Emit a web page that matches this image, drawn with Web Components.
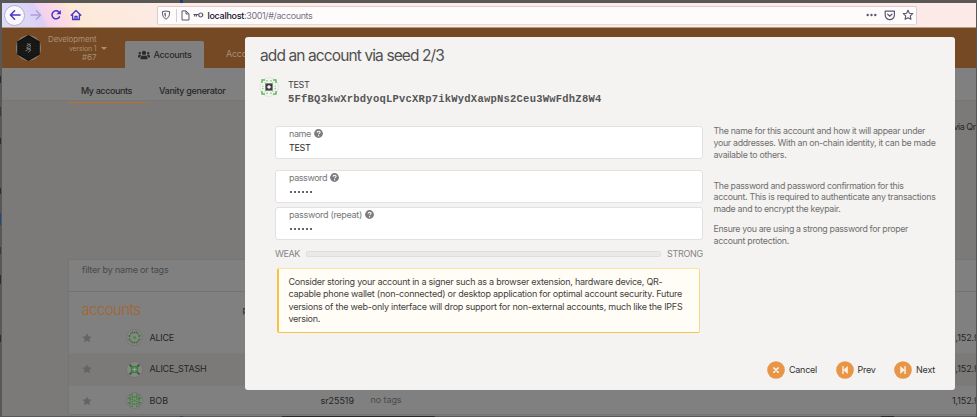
<!DOCTYPE html>
<html lang="en">
<head>
<meta charset="utf-8">
<title>Accounts</title>
<style>
html,body{margin:0;width:977px;height:417px;overflow:hidden;background:#595855}
body{font-family:Inter,"Liberation Sans",sans-serif}
</style>
</head>
<body>
<app-window></app-window>
<script>
const define=(name,html,setup)=>customElements.define(name,class extends HTMLElement{
  connectedCallback(){
    if(this.shadowRoot)return;
    const root=this.attachShadow({mode:'open'});
    root.innerHTML=typeof html==='function'?html(this):html;
    if(setup)setup(this,root);
  }
});

/* One line of text; attribute w gives its width, reached with letter spacing. */
define('text-line','<style>:host{display:block;white-space:nowrap;line-height:12px;font-size:9px;flex:none}span{display:inline-block}</style><span><slot></slot></span>',(el,root)=>{
  const w=parseFloat(el.getAttribute('w'));
  if(!w)return;
  queueMicrotask(()=>{
    const n=[...el.textContent].length;
    const now=root.querySelector('span').getBoundingClientRect().width;
    if(n&&now)el.style.letterSpacing=((w-now)/n).toFixed(4)+'px';
  });
});

/* Icons */
const ICONS={
 back:'<svg width="12" height="12" viewBox="0 0 12 12"><path d="M11 6H1.6M5.6 1.8L1.4 6l4.2 4.2" fill="none" stroke="currentColor" stroke-width="1.5" stroke-linecap="round" stroke-linejoin="round"/></svg>',
 forward:'<svg width="12" height="12" viewBox="0 0 12 12"><path d="M1 6h9.4M6.4 1.8L10.6 6l-4.2 4.2" fill="none" stroke="currentColor" stroke-width="1.4" stroke-linecap="round" stroke-linejoin="round"/></svg>',
 reload:'<svg width="12" height="12" viewBox="0 0 12 12"><path d="M9.5 7.8A4 4 0 1 1 8.9 3.1L10 4.2" fill="none" stroke="currentColor" stroke-width="1.5" stroke-linecap="round"/><path d="M10.8 1v4.3H6.5z" fill="currentColor"/></svg>',
 home:'<svg width="12" height="12" viewBox="0 0 12 12"><path d="M1.2 6.2L6 1.4l4.8 4.8M2.6 5.5v5h6.8v-5M5 10.4V7.3h2v3.1" fill="none" stroke="currentColor" stroke-width="1.35" stroke-linecap="round" stroke-linejoin="round"/></svg>',
 shield:'<svg width="10" height="10" viewBox="0 0 10 10"><path d="M1.4 1.6Q5 .5 8.6 1.6C8.7 5.4 7.800 7.700 5 9.200 2.200 7.700 1.300 5.400 1.400 1.600z" fill="none" stroke="currentColor" stroke-width="1"/><path d="M5 2.700V7.300C3.500 6.300 3.100 5 3.100 3z" fill="currentColor" opacity=".75"/></svg>',
 page:'<svg width="9" height="11" viewBox="0 0 9 11"><path d="M1 .9h4L8 3.900V10H1zM5 .9v3h3" fill="none" stroke="currentColor" stroke-width="1" stroke-linejoin="round"/></svg>',
 key:'<svg width="11" height="6" viewBox="0 0 11 6"><path d="M.4 2.500h5.200M1.700 2.500v2M3.500 2.500v2" fill="none" stroke="currentColor" stroke-width="1.200"/><circle cx="7.700" cy="3" r="2" fill="none" stroke="currentColor" stroke-width="1.200"/></svg>',
 dots:'<svg width="11" height="4" viewBox="0 0 11 4"><g fill="currentColor"><circle cx="1.700" cy="2" r="1.200"/><circle cx="5.500" cy="2" r="1.200"/><circle cx="9.300" cy="2" r="1.200"/></g></svg>',
 pocket:'<svg width="12" height="11" viewBox="0 0 12 11"><path d="M1.200 1.200h9.200V5a4.600 4.600 0 0 1-9.200 0zM3.700 4.200l2.100 2 2.100-2" fill="none" stroke="currentColor" stroke-width="1.200" stroke-linejoin="round" stroke-linecap="round"/></svg>',
 staro:'<svg width="12" height="12" viewBox="0 0 12 12"><path d="M6 1.200l1.400 3 3.300.4-2.400 2.300.6 3.400L6 8.700l-2.900 1.600.6-3.400L1.300 4.600l3.300-.4z" fill="none" stroke="currentColor" stroke-width="1.150" stroke-linejoin="round"/></svg>',
 star:'<svg width="10" height="10" viewBox="0 0 10 10"><path d="M5 .4l1.400 2.900 3.200.5-2.300 2.200.6 3.200L5 7.700 2.100 9.200l.6-3.200L.4 3.800l3.200-.5z" fill="currentColor"/></svg>',
 users:'<svg width="12" height="10" viewBox="0 0 640 512"><path fill="currentColor" d="M96 224a64 64 0 1 0 0-128 64 64 0 0 0 0 128zm448 0a64 64 0 1 0 0-128 64 64 0 0 0 0 128zm32 32h-64c-18 0-34 7-45 19 40 22 69 62 75 109h66c18 0 32-14 32-32v-32c0-35-29-64-64-64zm-256 0a112 112 0 1 0 0-224 112 112 0 0 0 0 224zm77 32h-8a155 155 0 0 1-138 0h-8c-64 0-115 52-115 115v29c0 27 21 48 48 48h288c27 0 48-21 48-48v-29c0-63-51-115-115-115zM173 275c-11-12-27-19-45-19H64c-35 0-64 29-64 64v32c0 18 14 32 32 32h66c6-47 35-87 75-109z"/></svg>',
 help:'<svg width="9" height="9" viewBox="0 0 9 9"><circle cx="4.500" cy="4.500" r="4.400" fill="#7b7b7b"/><path d="M3.050 3.600C3.150 2.500 4 2.150 4.700 2.200c.9.050 1.400.6 1.350 1.300C6 4.400 4.650 4.400 4.600 5.300" fill="none" stroke="#fff" stroke-width="1.050"/><circle cx="4.600" cy="6.700" r=".68" fill="#fff"/></svg>',
 cancel:'<svg width="18" height="18" viewBox="0 0 18 18"><circle cx="9" cy="9" r="8.800" fill="#e89547"/><path d="M6.900 7l4.200 4.200M11.100 7l-4.200 4.200" stroke="#fdf3e6" stroke-width="1.700" stroke-linecap="round"/></svg>',
 prev:'<svg width="18" height="18" viewBox="0 0 18 18"><circle cx="9" cy="9" r="8.800" fill="#e89547"/><path d="M6.200 5.200h1.500v3.300L11.800 5v8L7.700 9.500v3.400H6.200z" fill="#fdeedd"/></svg>',
 next:'<svg width="18" height="18" viewBox="0 0 18 18"><circle cx="9" cy="9" r="8.800" fill="#e89547"/><path d="M11.800 5.200h-1.500v3.300L6.200 5v8l4.100-3.500v3.400h1.500z" fill="#fdeedd"/></svg>',
 logo:'<svg width="27" height="28" viewBox="0 0 27 28"><defs><pattern id="m" width="2.400" height="2.400" patternUnits="userSpaceOnUse"><path d="M0 1.200L1.200 0l1.200 1.200-1.200 1.200z" fill="none" stroke="#3d3b39" stroke-width=".45"/></pattern></defs><circle cx="13.500" cy="14" r="12.700" fill="#85776c"/><path d="M13.500 1L24.700 7.400v13.200L13.500 27 2.300 20.600V7.400z" fill="#080808"/><path d="M13.500 2L23.900 8v12L13.500 26 3.100 20V8z" fill="url(#m)"/><path d="M12 9.500l4 2-4.500 2.500 4.500 2-3 2.500M15.500 9.500l-4 2.500M16 13.500l-5.500 3.500" fill="none" stroke="#8e8d8b" stroke-width=".8"/></svg>',
 idTest:'<svg width="20" height="20" viewBox="0 0 20 20"><circle cx="10" cy="10" r="9.500" fill="#f2f4ef" stroke="#dfe0dc" stroke-width=".8"/><path d="M3 6V3h3M14 3h3v3M17 14v3h-3M6 17H3v-3" fill="none" stroke="#62b862" stroke-width="1.500"/><path d="M7.200 3.700h1.500M11.300 3.700h1.500M7.200 16.300h1.500M11.300 16.300h1.500M3.700 8.700v1M3.700 11v1.300M16.300 8.700v1M16.300 11v1.300M5.600 5.600h1M13.400 5.600h1M5.600 14.400h1M13.400 14.400h1" stroke="#8fd08c" stroke-width="1.400"/><rect x="6.400" y="6.400" width="7.200" height="7.200" fill="#3d3d3d"/><path d="M8.200 10h3.600M10 8.200v3.600" stroke="#fff" stroke-width="1.500"/></svg>',
 idA:'<svg width="17" height="17" viewBox="0 0 17 17"><circle cx="8.500" cy="8.500" r="8" fill="#858784" stroke="#716f6e" stroke-width=".7"/><path d="M5.500 3.500h1.700M9.800 3.500h1.700M5.500 13.500h1.700M9.800 13.500h1.700M3.500 6v2M3.500 9.500v2M13.500 6v2M13.500 9.500v2" stroke="#3a7a36" stroke-width="2"/><path d="M8.500 2.800v1.500M8.500 12.700v1.500M4.300 4.800h1M11.700 4.800h1M4.300 12.200h1M11.700 12.200h1" stroke="#44503f" stroke-width="1.400"/><rect x="7.300" y="7.300" width="2.500" height="2.500" fill="#3f8a3b"/></svg>',
 idS:'<svg width="17" height="17" viewBox="0 0 17 17"><circle cx="8.500" cy="8.500" r="8" fill="#858784" stroke="#716f6e" stroke-width=".7"/><path d="M3.600 3.600l2 2M13.400 3.600l-2 2M3.600 13.400l2-2M13.400 13.400l-2-2" stroke="#38573a" stroke-width="1.900"/><rect x="4.900" y="5" width="7.200" height="7" fill="#3f7d3e"/><path d="M8.500 6.200v4.600M6.200 8.500h4.600" stroke="#91a08f" stroke-width="1.300"/></svg>',
 idB:'<svg width="17" height="17" viewBox="0 0 17 17"><circle cx="8.500" cy="8.500" r="8" fill="#858784" stroke="#716f6e" stroke-width=".7"/><path d="M4 2.500v12M6.300 1.800v13.400M10.700 1.800v13.400M13 2.500v12" stroke="#437f3e" stroke-width="1.500" stroke-dasharray="1.600 .7"/><path d="M1.800 6.300h3M12.200 6.300h3M1.800 10.700h3M12.200 10.700h3M8.500 4v2M8.500 11v2" stroke="#437f3e" stroke-width="1.500"/><rect x="7.600" y="7.600" width="1.900" height="1.900" fill="#437f3e"/></svg>'
};
define('ui-icon',el=>`<style>:host{display:block;flex:none;line-height:0}svg{display:block}</style>${ICONS[el.getAttribute('name')]}`);

define('browser-bar',`<style>
:host{display:flex;height:24px;box-sizing:border-box;align-items:center;color:#4638c8;
 background:linear-gradient(60deg,#dcdcf8 0,#dcd8f8 24px,#dbcff5 38px,#f3d2ee 42px,#f9d8e6 52px,#fbdfdf 62px,#fde8d6 68px,#fdeadc 90px,#fcebe4 140px,#fcece7 400px,#fceae8 840px)}
.back{width:19px;height:19px;border:1px solid #b5aecb;border-radius:50%;background:#faf7fd;display:flex;align-items:center;justify-content:center;margin-left:2px;flex:none}
.fwd{color:#a9a0dd;margin-left:4.500px}.re{margin-left:8px}.home{margin-left:8px}
.url{display:flex;align-items:center;width:758px;height:17px;margin-left:75.500px;border:1px solid #e2c8d0;border-bottom-color:#e5dcd6;border-radius:2px;background:#fefcfb;color:#5b5670;flex:none}
.sh{margin-left:3px}.sep{width:1px;height:13px;background:#d4d0d9;margin:0 4px 0 5px}
.key{margin-left:3px}.a{color:#15102e;margin-left:3.500px;font-weight:500}.b{color:#78738a}
.a,.b{font-size:9px;padding-top:1px}.d{margin-left:auto}.p{margin-left:6.500px}.s{margin:0 2.500px 0 6px}
</style><div class="back"><ui-icon name="back"></ui-icon></div><ui-icon class="fwd" name="forward"></ui-icon><ui-icon class="re" name="reload"></ui-icon><ui-icon class="home" name="home"></ui-icon>
<div class="url"><ui-icon class="sh" name="shield"></ui-icon><i class="sep"></i><ui-icon name="page"></ui-icon><ui-icon class="key" name="key"></ui-icon><text-line class="a" w="36.500">localhost</text-line><text-line class="b" w="68.500">:3001/#/accounts</text-line><ui-icon class="d" name="dots"></ui-icon><ui-icon class="p" name="pocket"></ui-icon><ui-icon class="s" name="staro"></ui-icon></div>`);

define('app-header',`<style>
:host{display:flex;height:40px;background:#744923;border-top:1px solid #b99c84}
.logo{margin:6px 0 0 13px}
.net{display:flex;flex-direction:column;align-items:flex-end;width:54.500px;margin-top:7px;color:#aa9078}
.net text-line{line-height:9px;font-size:8px}.net .v{font-size:7px}
.car{width:0;height:0;border:3px solid transparent;border-top:3.500px solid #aa9078;border-bottom:0;margin:18.500px 0 0 4.500px}
.tab{display:flex;align-items:center;width:79px;height:27px;margin:13px 0 0 18px;background:#808080;border-radius:2px 2px 0 0;color:#2a2a2a}
.tab ui-icon{margin:0 4px 0 12.500px}.tab text-line{font-weight:500}
.other{margin:20px 0 0 22px;color:#aa9078}
</style><ui-icon class="logo" name="logo"></ui-icon><div class="net"><text-line w="48.500">Development</text-line><text-line class="v" w="27.500">version 1</text-line><text-line w="14.500">#67</text-line></div><i class="car"></i>
<div class="tab"><ui-icon name="users"></ui-icon><text-line w="38">Accounts</text-line></div><text-line class="other" w="38">Accounts</text-line>`);

define('sub-tabs',`<style>
:host{display:flex;height:33px;background:#808080;box-sizing:border-box;border-bottom:1px solid #777675;padding-left:66px;color:#272727}
div{height:35px;box-sizing:border-box;padding:17px 13px 0;font-weight:500}
.on{width:78px;border-bottom:1px solid #b8722f;position:relative}
</style><div class="on"><text-line w="51">My accounts</text-line></div><div><text-line w="66.500">Vanity generator</text-line></div>`);

define('account-row',el=>`<style>
:host{display:flex;align-items:center;height:31.500px;color:#262626;box-sizing:border-box;border-bottom:1px solid #7d7c7b}
:host([odd]){background:#7c7a78}
.st{color:#646464;margin:0 34.500px 0 12.500px}.n{margin-left:6.500px;width:171px}.k{width:50px}.t{color:#4b4b4b;padding-bottom:2px}.bal{margin:0 -4px 0 auto}
</style><ui-icon class="st" name="star"></ui-icon><ui-icon name="${el.getAttribute('icon')}"></ui-icon><text-line class="n" w="${el.getAttribute('nw')}">${el.getAttribute('name')}</text-line><text-line class="k" w="33.500">${el.hasAttribute('crypto')?'sr25519':''}</text-line><text-line class="t" w="31">${el.hasAttribute('crypto')?'no tags':''}</text-line><text-line class="bal" w="27.500">1,152.9</text-line>`);

define('account-list',`<style>
:host{display:block;margin-left:66px;height:156px;background:#808080;border:1px solid #767574;border-right:0;box-sizing:border-box;overflow:hidden}
.f{height:32px;border-bottom:1px solid #747372;box-sizing:border-box;padding:4px 13px;color:#494949}
.h{display:flex;align-items:center;height:30.500px;padding:5px 0 0 12.500px;box-sizing:border-box}
.h .ti{color:#a5652c;font-size:15px;line-height:20px;width:161px;font-weight:300}.h .p{color:#262626;padding-top:1px}
</style><div class="f"><text-line w="86.500">filter by name or tags</text-line></div><div class="h"><text-line class="ti" w="59">accounts</text-line><text-line class="p">parent</text-line></div>
<account-row icon="idA" name="ALICE" nw="24.500"></account-row><account-row odd icon="idS" name="ALICE_STASH" nw="57"></account-row><account-row icon="idB" name="BOB" nw="18.500" crypto></account-row>`);

define('text-field',el=>`<style>
:host{display:block;height:33px;box-sizing:border-box;border:1px solid #e1e1e1;border-radius:3px;background:#fff;padding:1px 13px 0}
.l{display:flex;align-items:center;gap:3px;height:12px;color:#777}.l ui-icon{margin-top:-1px}.v{margin-top:2px;color:#2c2c2c;font-size:9px}
.dots{display:flex;gap:1.850px;margin-top:7px;padding-left:.5px}.dots i{width:2.200px;height:2.200px;border-radius:50%;background:#333}
</style><div class="l"><text-line w="${el.getAttribute('lw')}">${el.getAttribute('label')}</text-line><ui-icon name="help"></ui-icon></div>${el.hasAttribute('secret')?'<div class="dots"><i></i><i></i><i></i><i></i><i></i><i></i></div>':'<text-line class="v" w="21.500">TEST</text-line>'}`);

define('strength-meter',`<style>:host{display:flex;align-items:center;height:12px;color:#858585}
i{flex:1;height:4px;border:1px solid #dedede;background:#e9e9e9;border-radius:1.500px;margin:0 6.500px 0 6px}
</style><text-line w="25">WEAK</text-line><i></i><text-line w="36">STRONG</text-line>`);

define('warning-box',`<style>:host{display:block;margin:8px 3px 0 2px;height:65px;box-sizing:border-box;background:#fffdf5;border:1px solid #fbe3a6;border-left:2px solid #f5c344;border-right-color:#f8d98b;border-bottom-color:#f3c550;border-radius:2px;padding:7px 0 0 9.500px;color:#3f3f3f}
text-line{line-height:12.400px}</style><text-line w="374">Consider storing your account in a signer such as a browser extension, hardware device, QR-</text-line><text-line w="393.500">capable phone wallet (non-connected) or desktop application for optimal account security. Future</text-line><text-line w="394">versions of the web-only interface will drop support for non-external accounts, much like the IPFS</text-line><text-line w="31.500">version.</text-line>`);

define('help-text',`<style>:host{display:block;color:#6f6f6f}text-line{font-size:8.800px;line-height:11.850px}.p{margin-top:19px}.q{margin-top:8px}</style>
<text-line w="211.500">The name for this account and how it will appear under</text-line><text-line w="222">your addresses. With an on-chain identity, it can be made</text-line><text-line w="73">available to others.</text-line>
<text-line class="p" w="190">The password and password confirmation for this</text-line><text-line w="222">account. This is required to authenticate any transactions</text-line><text-line w="127">made and to encrypt the keypair.</text-line>
<text-line class="q" w="194.500">Ensure you are using a strong password for proper</text-line><text-line w="75.500">account protection.</text-line>`);

define('modal-dialog',`<style>
:host{display:flex;flex-direction:column;box-sizing:border-box;background:#f4f3f1;border-radius:3px;color:#404040}
.title{font-size:15.500px;line-height:20px;margin:9px 0 0 15px;color:#505050}
.acct{display:flex;margin:11px 0 0 13.500px;gap:9.500px}.acct div{padding-top:2px}.addr{font-family:"Liberation Mono",monospace;font-size:10.500px;font-weight:700;line-height:13px;margin-top:2px;color:#565656}
.cols{display:grid;grid-template-columns:428px 230px;column-gap:10.500px;margin:20px 0 0 30px}
.gap{margin-top:11px}.near{margin-top:4px}strength-meter{margin-top:8px}help-text{margin-top:-1px}
.btns{display:flex;align-items:center;justify-content:flex-end;height:18px;margin:auto 20px 11px 0;color:#333}.btns text-line{margin-left:4px}.btns .n{margin-left:18.500px}
.body{display:block}
</style><text-line class="title" w="184">add an account via seed 2/3</text-line>
<div class="acct"><ui-icon name="idTest"></ui-icon><div><text-line w="21.500">TEST</text-line><text-line class="addr" w="313.500">5FfBQ3kwXrbdyoqLPvcXRp7ikWydXawpNs2Ceu3WwFdhZ8W4</text-line></div></div>
<div class="cols"><div class="body"><text-field label="name" lw="22"></text-field><text-field class="gap" label="password" lw="38" secret></text-field><text-field class="near" label="password (repeat)" lw="73" secret></text-field><strength-meter></strength-meter><warning-box></warning-box></div><help-text></help-text></div>
<div class="btns"><ui-icon name="cancel"></ui-icon><text-line w="28">Cancel</text-line><ui-icon class="n" name="prev"></ui-icon><text-line w="18">Prev</text-line><ui-icon class="n" name="next"></ui-icon><text-line w="19">Next</text-line></div>`);

define('app-window',`<style>
:host{display:block;position:relative;width:977px;height:417px;overflow:hidden;background:linear-gradient(#174076,#174076) 180px 0/3px 3px no-repeat,linear-gradient(#174b91,#174b91) 180px 415px/3px 2px no-repeat,linear-gradient(#2b2b2b,#2b2b2b) 282px 415px/153px 2px no-repeat,linear-gradient(#2b2b2b,#2b2b2b) 881px 415px/13px 2px no-repeat,linear-gradient(#1d4a84,#1d4a84) 0 213px/1px 12px no-repeat,
 linear-gradient(#2c2c2c,#2c2c2c) 0 76px/1px 7px no-repeat,linear-gradient(#3a3a3a,#3a3a3a) 0 107px/1px 9px no-repeat,linear-gradient(#2c2c2c,#2c2c2c) 0 138px/1px 6px no-repeat,linear-gradient(#2c2c2c,#2c2c2c) 0 188px/1px 6px no-repeat,linear-gradient(#3a3a3a,#3a3a3a) 0 247px/1px 7px no-repeat,linear-gradient(#2c2c2c,#2c2c2c) 0 275px/1px 9px no-repeat,linear-gradient(#2c2c2c,#2c2c2c) 0 335px/1px 7px no-repeat,#595855;padding:3px 2px 2px;box-sizing:border-box}
.screen{width:973.500px;height:412.500px;overflow:hidden;background:#7c7a78}
.gap{height:158px;box-sizing:border-box;padding-top:20px;color:#262626;display:flex;justify-content:flex-end;align-items:flex-start}
modal-dialog{position:absolute;left:245px;top:37px;width:710px;height:353px}
</style><div class="screen"><browser-bar></browser-bar><app-header></app-header><sub-tabs></sub-tabs><div class="gap"><text-line w="22">via Qr</text-line></div><account-list></account-list></div><modal-dialog></modal-dialog>`);
</script>
</body>
</html>
